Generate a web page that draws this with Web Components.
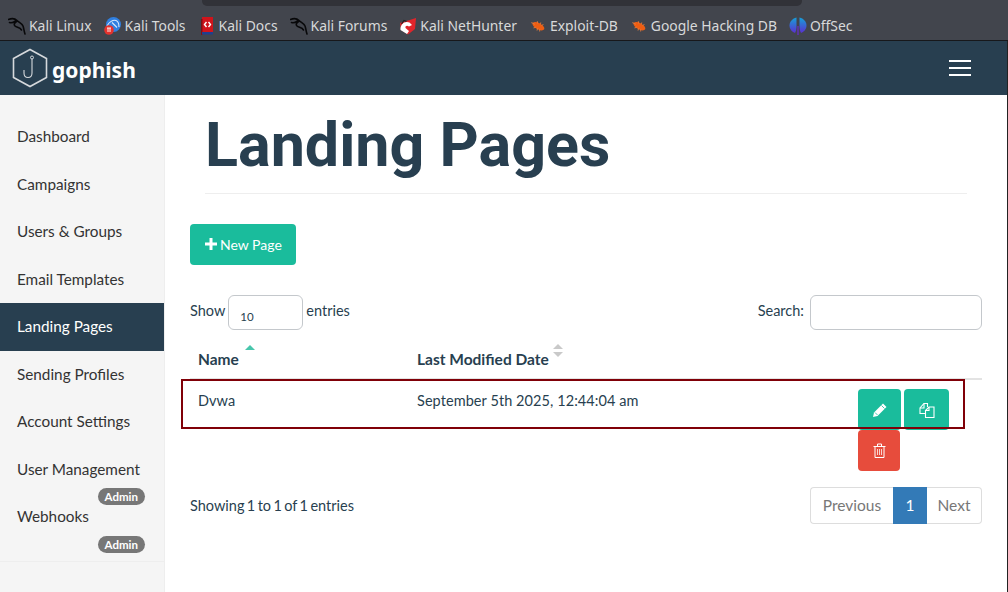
<!DOCTYPE html>
<html>
<head>
<meta charset="utf-8">
<title>Gophish - Landing Pages</title>
<style>
    html, body { margin: 0; height: 100%; overflow: hidden; background: #fff; }
    body { font-family: "Lato", "Noto Sans", sans-serif; font-size: 14.5px; color: #283f50; }
    #page { display: flex; flex-direction: column; height: 592px; width: 1008px; }
</style>
</head>
<body>
<div id="page">
    <browser-bar>
        <book-mark label="Kali Linux" icon="kali"></book-mark>
        <book-mark label="Kali Tools" icon="tools"></book-mark>
        <book-mark label="Kali Docs" icon="docs"></book-mark>
        <book-mark label="Kali Forums" icon="kali"></book-mark>
        <book-mark label="Kali NetHunter" icon="nethunter"></book-mark>
        <book-mark label="Exploit-DB" icon="bug"></book-mark>
        <book-mark label="Google Hacking DB" icon="bug"></book-mark>
        <book-mark label="OffSec" icon="offsec"></book-mark>
    </browser-bar>
    <top-nav></top-nav>
    <app-layout>
        <side-bar slot="side">
            <nav-item>Dashboard</nav-item>
            <nav-item>Campaigns</nav-item>
            <nav-item>Users &amp; Groups</nav-item>
            <nav-item>Email Templates</nav-item>
            <nav-item active>Landing Pages</nav-item>
            <nav-item>Sending Profiles</nav-item>
            <nav-item>Account Settings</nav-item>
            <nav-item badge="Admin">User Management</nav-item>
            <nav-item badge="Admin">Webhooks</nav-item>
        </side-bar>
        <page-title>Landing Pages</page-title>
        <new-button>New Page</new-button>
        <pages-table></pages-table>
    </app-layout>
</div>

<script>
const ICONS = {
    kali: `<path d="M0.500 2.500C4 1 7 1.500 9 3.500c2 2 5 3 6 5.500 .8 2 .8 4.500 2 8M1.500 5.500c2 .5 4 0 6-1.500M8.500 4.500C6.500 6 5.500 7.500 7 9c1.500 1.500 5 1.500 6.500 4" fill="none" stroke="#08080a" stroke-width="1.600" stroke-linecap="round"/>`,
    tools: `<circle cx="9.500" cy="7.500" r="7.500" fill="#2f7fe0"/><path d="M3 9c2-4 6-6.500 9-5.500 2 .8 3 3.500 3 6.500M8 5.500l5 5" fill="none" stroke="#d5e8fc" stroke-width="1.100"/><circle cx="5" cy="13" r="4.800" fill="#e5322d"/><path d="M3 11h4M4 11v4M6 11v4" stroke="#fff" stroke-width=".9"/>`,
    docs: `<path d="M4 0h11v15H4z" fill="#d0141b"/><path d="M3 2h1.500v16H3z" fill="#7d1015"/><path d="M4 15h11v2.500H4z" fill="#1f3f8f"/><path d="M8.500 5L6.500 7.500 8.500 10M10.500 5l2 2.500-2 2.500" fill="none" stroke="#fff" stroke-width="1.400"/>`,
    nethunter: `<path d="M1 6L17 1l-1 11-7 5.500L2 13z" fill="#e1252b"/><path d="M1.500 13C1 7 6 3.500 10.500 5.500L13 8l-3 1.500C8 8 6 9 6.500 11l3.500 3-2 3z" fill="#fff"/><path d="M2.500 7l2.500-3.500 2.500 1" fill="none" stroke="#222" stroke-width="1.100"/>`,
    bug: `<g transform="rotate(28 9 9)"><ellipse cx="9.500" cy="9" rx="6.500" ry="3.200" fill="#ee5d12"/><path d="M1.500 9h4M6 5l1.500 2M10 4.500v2M13 5l-1 2M6 13l1.500-2M10 13.500v-2.500M13 13l-1-2" stroke="#e9803f" stroke-width="1" stroke-opacity=".8"/></g>`,
    offsec: `<defs><linearGradient id="os" x1="0" y1="0" x2="0" y2="1"><stop offset="0" stop-color="#16a0d8"/><stop offset="1" stop-color="#5a2fd0"/></linearGradient></defs><path d="M7.500 .500C3.500 1.500 .500 4.500 .500 8.500c0 4 3 6.500 5.500 7.500 1-2 1.500-4 1.500-7z" fill="url(#os)"/><path d="M10.500 .500c4 1 7 4 7 8 0 4-3 6.500-5.500 7.500-1-2-1.500-4-1.500-7z" fill="url(#os)"/><path d="M8.400 9h1.200v9H8.400z" fill="#6a2ad0"/>`
};

class BrowserBar extends HTMLElement {
    connectedCallback() {
        this.attachShadow({ mode: 'open' });
        this.shadowRoot.innerHTML = `
            <style>
                :host {
                    display: block;
                    height: 41px;
                    flex: none;
                    position: relative;
                    box-sizing: border-box;
                    background: #42454d;
                    border-bottom: 1px solid #17181b;
                }
                .url {
                    position: absolute;
                    left: 202px;
                    top: 0;
                    width: 600px;
                    height: 6px;
                    background: #313238;
                    border-radius: 0 0 5px 5px;
                }
                .marks {
                    display: flex;
                    align-items: center;
                    height: 100%;
                    padding: 11px 0 0 8px;
                    box-sizing: border-box;
                    gap: 12px;
                }
            </style>
            <div class="url"></div>
            <div class="marks"><slot></slot></div>
        `;
    }
}

class BookMark extends HTMLElement {
    connectedCallback() {
        this.attachShadow({ mode: 'open' });
        this.shadowRoot.innerHTML = `
            <style>
                :host {
                    display: flex;
                    align-items: center;
                    gap: 3px;
                    font: 13.900px "Noto Sans", sans-serif;
                    color: #d8d9da;
                    white-space: nowrap;
                }
                svg { width: 18px; height: 18px; flex: none; }
            </style>
            <svg viewBox="0 0 18 18">${ICONS[this.getAttribute('icon')]}</svg>
            <span>${this.getAttribute('label')}</span>
        `;
    }
}

class TopNav extends HTMLElement {
    connectedCallback() {
        this.attachShadow({ mode: 'open' });
        this.shadowRoot.innerHTML = `
            <style>
                :host {
                    display: flex;
                    flex: none;
                    align-items: center;
                    justify-content: space-between;
                    height: 54px;
                    background: #283f50;
                    border-right: 1px solid #222;
                    padding: 0 36px 0 12px;
                    box-sizing: border-box;
                }
                .brand { display: flex; align-items: center; gap: 4px; }
                .brand span {
                    font: 700 21px "Noto Sans", sans-serif;
                    color: #fff;
                    margin-top: 3px;
                }
                .burger { display: flex; flex-direction: column; gap: 5px; width: 22px; }
                .burger i { display: block; height: 2px; background: #fff; }
            </style>
            <div class="brand">
                <svg width="36" height="40" viewBox="0 0 36 40">
                    <path d="M18 1.500L34.500 10.500v19L18 38.500 1.500 29.500v-19z" fill="none" stroke="#d6d9dc" stroke-width="1.600"/>
                    <path d="M20 11v14c0 6-8 6-8 0v-3" fill="none" stroke="#d6d9dc" stroke-width="1.100"/>
                    <circle cx="20" cy="9.500" r="1.500" fill="none" stroke="#d6d9dc" stroke-width="1"/>
                </svg>
                <span>gophish</span>
            </div>
            <div class="burger"><i></i><i></i><i></i></div>
        `;
    }
}

class AppLayout extends HTMLElement {
    connectedCallback() {
        this.attachShadow({ mode: 'open' });
        this.shadowRoot.innerHTML = `
            <style>
                :host {
                    display: grid;
                    grid-template-columns: 165px 1fr;
                    flex: 1;
                    min-height: 0;
                    border-right: 1px solid #222;
                }
                .main { padding: 0 25px; min-width: 0; }
            </style>
            <slot name="side"></slot>
            <div class="main"><slot></slot></div>
        `;
    }
}

class SideBar extends HTMLElement {
    connectedCallback() {
        this.attachShadow({ mode: 'open' });
        this.shadowRoot.innerHTML = `
            <style>
                :host {
                    display: block;
                    background: #f5f5f5;
                    border-right: 1px solid #eee;
                    padding-top: 18px;
                    box-sizing: border-box;
                }
                .list { border-bottom: 1px solid #eee; height: 448px; }
            </style>
            <div class="list"><slot></slot></div>
        `;
    }
}

class NavItem extends HTMLElement {
    connectedCallback() {
        const badge = this.getAttribute('badge');
        this.attachShadow({ mode: 'open' });
        this.shadowRoot.innerHTML = `
            <style>
                :host {
                    display: flex;
                    align-items: center;
                    height: 47.500px;
                    box-sizing: border-box;
                    padding: 0 0 .8px 17px;
                    position: relative;
                    color: #333;
                    font-size: 15.300px;
                    white-space: nowrap;
                }
                :host([active]) { background: #283f50; color: #fff; }
                .badge {
                    position: absolute;
                    right: 19px;
                    top: 42.500px;
                    height: 17px;
                    line-height: 17px;
                    padding: 0 7px;
                    border-radius: 9px;
                    background: #777;
                    color: #fff;
                    font-size: 11.500px;
                    font-weight: 700;
                    z-index: 1;
                }
            </style>
            <slot></slot>
            ${badge ? `<span class="badge">${badge}</span>` : ''}
        `;
    }
}

class PageTitle extends HTMLElement {
    connectedCallback() {
        this.attachShadow({ mode: 'open' });
        this.shadowRoot.innerHTML = `
            <style>
                :host {
                    display: block;
                    margin: 0 15px;
                    height: 99px;
                    border-bottom: 1px solid #eee;
                    font: 700 61px/101px Roboto, sans-serif;
                    color: #283f50;
                    box-sizing: border-box;
                }
            </style>
            <slot></slot>
        `;
    }
}

class NewButton extends HTMLElement {
    connectedCallback() {
        this.attachShadow({ mode: 'open' });
        this.shadowRoot.innerHTML = `
            <style>
                :host {
                    display: flex;
                    width: 106px;
                    align-items: center;
                    gap: 3px;
                    height: 41px;
                    margin-top: 30px;
                    padding: 0 0 1px 15px;
                    box-sizing: border-box;
                    background: #1abc9c;
                    border-radius: 4px;
                    color: #fff;
                    font-size: 14px;
                }
            </style>
            <svg width="12" height="12" viewBox="0 0 12 12"><path d="M4.500 0h3v4.500H12v3H7.500V12h-3V7.500H0v-3h4.500z" fill="#fff"/></svg>
            <slot></slot>
        `;
    }
}

class PagesTable extends HTMLElement {
    connectedCallback() {
        this.attachShadow({ mode: 'open' });
        this.shadowRoot.innerHTML = `
            <style>
                :host { display: block; position: relative; margin-top: 30px; }
                .controls { display: flex; justify-content: space-between; align-items: center; height: 35px; }
                .group { display: flex; align-items: center; gap: 3px; }
                .group span { margin-bottom: 4px; }
                .box {
                    height: 35px;
                    box-sizing: border-box;
                    border: 1px solid #c4c8cc;
                    border-radius: 6px;
                    background: #fff;
                }
                .size { width: 75px; padding: 8px 0 0 11px; font-size: 11.500px; line-height: 25px; }
                .search { width: 172px; margin-left: 3px; }
                .head, .row { display: grid; grid-template-columns: 219px 1fr; padding-left: 8px; }
                .head {
                    margin-top: 14px;
                    height: 36px;
                    box-sizing: border-box;
                    border-bottom: 2px solid #e3e3e3;
                    font-weight: 700;
                    font-size: 15.500px;
                    line-height: 31px;
                }
                .head span { position: relative; display: block; }
                .sort { position: absolute; width: 0; height: 0; border: 5px solid transparent; border-top: 0; }
                .up { left: 47px; top: 1px; border-bottom: 5px solid #48c6ac; }
                .grey1 { left: 136px; top: 0; border-bottom: 5px solid #c9c9c9; }
                .grey2 { left: 136px; top: 8px; border-bottom: 0; border-top: 5px solid #c9c9c9; }
                .row { height: 92px; line-height: 42px; position: relative; letter-spacing: .07px; }
                .actions {
                    position: absolute;
                    left: 668px;
                    top: 9px;
                    width: 94px;
                    display: flex;
                    flex-wrap: wrap;
                    gap: 0 3px;
                }
                .btn {
                    display: flex;
                    align-items: center;
                    justify-content: center;
                    height: 41px;
                    width: 43px;
                    border-radius: 4px;
                    background: #1abc9c;
                }
                .btn.wide { width: 45px; }
                .btn.del { width: 42px; background: #e74c3c; }
                .footer { display: flex; justify-content: space-between; align-items: center; margin-top: 15px; }
                .footer > span { word-spacing: -1.300px; }
                .pager {
                    display: grid;
                    grid-template-columns: 83px 34px 55px;
                    height: 37px;
                    line-height: 35px;
                    text-align: center;
                    box-sizing: border-box;
                    color: #777;
                    font-size: 15.500px;
                }
                .pager span { border: 1px solid #ddd; }
                .pager span:first-child { border-radius: 4px 0 0 4px; border-right: 0; }
                .pager span:last-child { border-radius: 0 4px 4px 0; border-left: 0; }
                .pager .on { background: #337ab7; border-color: #337ab7; color: #fff; }
                .mark {
                    position: absolute;
                    left: -9px;
                    top: 84px;
                    width: 784px;
                    height: 50px;
                    box-sizing: border-box;
                    border: 2.500px solid #800008;
                    pointer-events: none;
                }
            </style>
            <div class="controls">
                <div class="group"><span>Show</span> <div class="box size">10</div> <span>entries</span></div>
                <div class="group"><span>Search:</span> <div class="box search"></div></div>
            </div>
            <div class="head">
                <span>Name<i class="sort up"></i></span>
                <span>Last Modified Date<i class="sort grey1"></i><i class="sort grey2"></i></span>
            </div>
            <div class="row">
                <span>Dvwa</span>
                <span>September 5th 2025, 12:44:04 am</span>
                <div class="actions">
                    <div class="btn">
                        <svg width="14" height="14" viewBox="0 0 14 14"><path d="M10 .500l3.500 3.500-9 9L0 14l1-4.500z" fill="#fff"/><path d="M8.500 2.500l3 3M2 9.500l2.500 2.500" stroke="#1abc9c" stroke-width=".8"/></svg>
                    </div>
                    <div class="btn wide">
                        <svg width="16" height="16" viewBox="0 0 16 16" fill="none" stroke="#fff" stroke-width="1.100"><path d="M6.500 11.500H1V6l4-4.500h3.500V5"/><path d="M5 1.500V6H1"/><path d="M6.500 11.500V8.500l3.500-3.500h5v10.500H6.500z"/><path d="M10 5v3.500H6.500"/></svg>
                    </div>
                    <div class="btn del">
                        <svg width="13" height="15" viewBox="0 0 13 15" fill="none" stroke="#fff" stroke-width="1"><path d="M.500 3.500h12M4.500 3.500V1h4v2.500M2 3.500v11h9v-11"/><path d="M4.500 6v6M6.500 6v6M8.500 6v6" stroke-opacity=".75"/></svg>
                    </div>
                </div>
            </div>
            <div class="footer">
                <span>Showing 1 to 1 of 1 entries</span>
                <div class="pager"><span>Previous</span><span class="on">1</span><span>Next</span></div>
            </div>
            <div class="mark"></div>
        `;
    }
}

customElements.define('browser-bar', BrowserBar);
customElements.define('book-mark', BookMark);
customElements.define('top-nav', TopNav);
customElements.define('app-layout', AppLayout);
customElements.define('side-bar', SideBar);
customElements.define('nav-item', NavItem);
customElements.define('page-title', PageTitle);
customElements.define('new-button', NewButton);
customElements.define('pages-table', PagesTable);
</script>
</body>
</html>
